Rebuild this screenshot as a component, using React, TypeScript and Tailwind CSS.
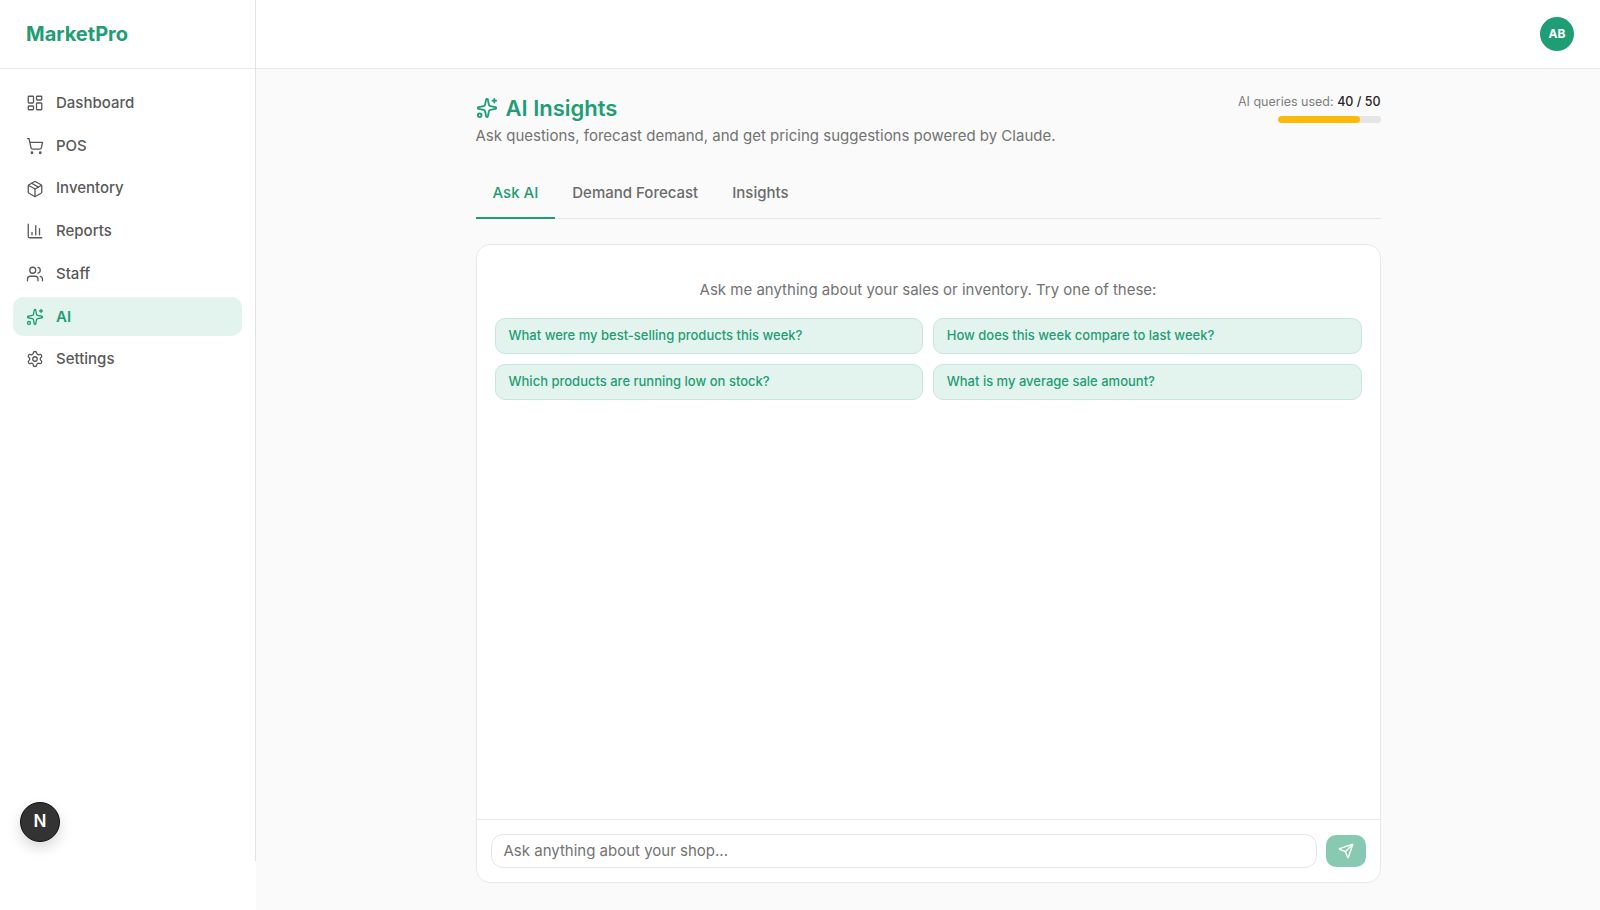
import { ChartColumn, LayoutDashboard, Package, Send, Settings, ShoppingCart, Sparkles, Users } from "lucide-react";

const navItems = [
  { label: "Dashboard", icon: LayoutDashboard },
  { label: "POS", icon: ShoppingCart },
  { label: "Inventory", icon: Package },
  { label: "Reports", icon: ChartColumn },
  { label: "Staff", icon: Users },
  { label: "AI", icon: Sparkles, active: true },
  { label: "Settings", icon: Settings },
];

const tabs = ["Ask AI", "Demand Forecast", "Insights"];

const suggestions = [
  "What were my best-selling products this week?",
  "How does this week compare to last week?",
  "Which products are running low on stock?",
  "What is my average sale amount?",
];

const App = () => {
  return (
    <div className="relative flex h-[910px] overflow-hidden bg-[#fafafa] font-['Inter',sans-serif] text-[#171717]">
      <aside className="w-[256px] shrink-0 bg-white">
        <div className="h-[861px] border-r border-[#e2e2e2]">
          <div className="flex h-[69px] items-center border-b border-[#e8e8e8] pl-[26px]">
            <span className="text-[20px] font-bold text-[#1f9d74]">MarketPro</span>
          </div>
          <nav className="flex flex-col gap-1 px-[13px] pt-[15px]">
            {navItems.map((item) => {
              const Icon = item.icon;
              return (
                <div
                  key={item.label}
                  className={`flex h-[38.7px] items-center gap-3 rounded-[10px] px-[13px] text-[15px] ${
                    item.active ? "bg-[#e3f4ee] font-semibold text-[#1f9d74]" : "font-medium text-[#595959]"
                  }`}
                >
                  <Icon size={18} strokeWidth={1.75} />
                  {item.label}
                </div>
              );
            })}
          </nav>
        </div>
      </aside>

      <div className="flex min-w-0 flex-1 flex-col">
        <header className="flex h-[69px] items-center justify-end border-b border-[#e8e8e8] bg-white pr-[26px]">
          <div className="flex h-[34px] w-[34px] items-center justify-center rounded-full bg-[#1f9d74] text-[12px] font-bold text-white">
            AB
          </div>
        </header>

        <main className="mx-auto flex w-[905px] flex-1 flex-col pt-[24px] pb-[27px]">
          <div className="flex items-start justify-between">
            <div>
              <h1 className="flex items-center gap-2 text-[22px] leading-[30px] font-semibold text-[#1f9d74]">
                <Sparkles size={22} strokeWidth={2} />
                AI Insights
              </h1>
              <p className="mt-[1px] text-[15px] leading-[24px] text-[#737373]">
                Ask questions, forecast demand, and get pricing suggestions powered by Claude.
              </p>
            </div>
            <div className="flex flex-col items-end pt-[1px]">
              <div className="text-[12.5px] leading-[16px] text-[#808080]">
                AI queries used: <span className="font-medium text-[#262626]">40 / 50</span>
              </div>
              <div className="mt-[6px] h-[7px] w-[103px] overflow-hidden rounded-full bg-[#e5e5e5]">
                <div className="h-full w-[80%] rounded-full bg-[#fdb90a]" />
              </div>
            </div>
          </div>

          <div className="mt-[21px] flex border-b border-[#e8e8e8]">
            {tabs.map((tab, index) => (
              <div
                key={tab}
                className={`-mb-px border-b-2 px-[17px] pt-[12px] pb-[12px] text-[15px] leading-[24px] font-medium ${
                  index === 0 ? "border-[#1f9d74] text-[#1f9d74]" : "border-transparent text-[#6b6b6b]"
                }`}
              >
                {tab}
              </div>
            ))}
          </div>

          <section className="mt-[25px] flex flex-1 flex-col rounded-[14px] border border-[#e8e8e8] bg-white">
            <div className="flex-1 px-[18px] pt-[33px]">
              <p className="text-center text-[15px] leading-[24px] text-[#737373]">
                Ask me anything about your sales or inventory. Try one of these:
              </p>
              <div className="mt-[16px] grid grid-cols-2 gap-[9.5px]">
                {suggestions.map((text) => (
                  <div
                    key={text}
                    className="flex h-[36px] items-center rounded-[10px] border border-[#c5e6da] bg-[#e3f4ee] px-[13px] text-[13px] font-medium text-[#1f9d74]"
                  >
                    {text}
                  </div>
                ))}
              </div>
            </div>
            <div className="flex items-center gap-[9px] border-t border-[#e8e8e8] px-[14px] py-[14px]">
              <div className="flex h-[34px] flex-1 items-center rounded-[12px] border border-[#e5e5e5] px-[12px] text-[15px] text-[#737373]">
                Ask anything about your shop...
              </div>
              <button className="flex h-[32px] w-[40px] items-center justify-center rounded-[10px] bg-[#87c9b1] text-white">
                <Send size={16} strokeWidth={2} />
              </button>
            </div>
          </section>
        </main>
      </div>

      <div className="absolute top-[802px] left-[20px] flex h-[40px] w-[40px] items-center justify-center rounded-full border border-[#111] bg-[#333] text-[17px] font-semibold text-white shadow-[0_6px_14px_rgba(0,0,0,0.15)]">
        N
      </div>
    </div>
  );
};

export default App;
